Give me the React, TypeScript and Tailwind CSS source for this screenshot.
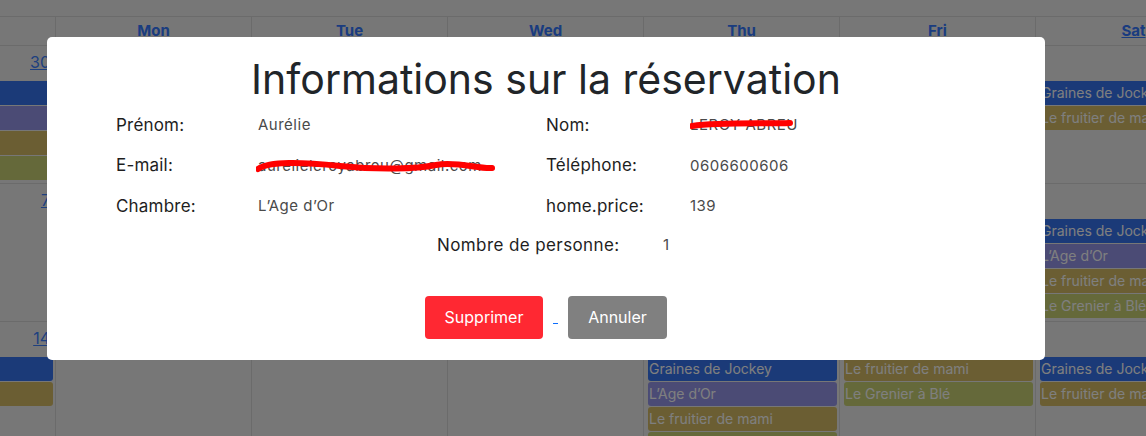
type Ev = { label: string; tone: "blue" | "purple" | "olive" | "green" };

const toneClass: Record<Ev["tone"], string> = {
  blue: "bg-[#3674f0]",
  purple: "bg-[#9696ea]",
  olive: "bg-[#d6bc66]",
  green: "bg-[#cad274]",
};

const days = ["Sun", "Mon", "Tue", "Wed", "Thu", "Fri", "Sat"];

const jockey: Ev = { label: "Graines de Jockey", tone: "blue" };
const ageOr: Ev = { label: "L’Age d’Or", tone: "purple" };
const fruitier: Ev = { label: "Le fruitier de mami", tone: "olive" };
const grenier: Ev = { label: "Le Grenier à Blé", tone: "green" };

const weeks: Array<{ dates: number[]; events: Ev[][] }> = [
  {
    dates: [30, 1, 2, 3, 4, 5, 6],
    events: [[jockey, ageOr, fruitier, grenier], [], [], [], [], [], [jockey, fruitier]],
  },
  {
    dates: [7, 8, 9, 10, 11, 12, 13],
    events: [[], [], [], [], [], [], [jockey, ageOr, fruitier, grenier]],
  },
  {
    dates: [14, 15, 16, 17, 18, 19, 20],
    events: [
      [jockey, fruitier],
      [],
      [],
      [],
      [jockey, ageOr, fruitier, grenier],
      [fruitier, grenier],
      [jockey, fruitier],
    ],
  },
];

function Calendar() {
  return (
    <div className="h-full overflow-hidden">
      <div className="h-[16px]" />
      <div className="ml-[-141px] w-[1372px] border-t border-[#d6d6d6]">
        <div className="grid h-[29px] grid-cols-7 border-b border-[#d6d6d6]">
          {days.map((d, i) => (
            <div
              key={d}
              className={`flex items-center justify-center border-l border-[#d6d6d6] text-[15px] font-bold text-[#3478ff] ${
                i === 6 ? "underline" : ""
              }`}
            >
              {d}
            </div>
          ))}
        </div>
        {weeks.map((w, wi) => (
          <div key={wi} className="grid h-[138px] grid-cols-7 border-b border-[#d6d6d6]">
            {w.dates.map((date, di) => (
              <div key={di} className="flex flex-col border-l border-[#d6d6d6]">
                <div className="h-[35px] pr-[5px] pt-[6px] text-right text-[16px] leading-[20px]">
                  <a className="text-[#3c80ff] underline">{date}</a>
                </div>
                {w.events[di].map((ev, ei) => (
                  <div
                    key={ei}
                    className={`mb-[1px] ml-[4px] mr-[2px] h-[24px] overflow-hidden whitespace-nowrap rounded-[3px] pl-[1px] text-[14px] leading-[24px] text-white ${toneClass[ev.tone]}`}
                  >
                    {ev.label}
                  </div>
                ))}
              </div>
            ))}
          </div>
        ))}
      </div>
    </div>
  );
}

function Field({
  label,
  value,
  scribble,
  labelWidth = "w-[142px]",
}: {
  label: string;
  value: string;
  scribble?: "mail" | "name";
  labelWidth?: string;
}) {
  return (
    <div className="flex h-[40.5px] items-center">
      <div className={`${labelWidth} text-[17px] font-normal tracking-[0.2px] text-[#1e1e1e]`}>{label}</div>
      <div className="relative text-[15px] tracking-[0.5px] text-[#4a4a4a]">
        {value}
        {scribble === "mail" && (
          <svg className="absolute left-[-2px] top-[-3px]" width="240" height="28" viewBox="0 0 240 28">
            <path
              d="M2 17 C 14 9, 45 10, 84 14 S 160 17, 180 13 S 222 17, 236 16"
              fill="none"
              stroke="#ff0000"
              strokeWidth="6"
              strokeLinecap="round"
            />
          </svg>
        )}
        {scribble === "name" && (
          <svg className="absolute left-[0px] top-[-1px]" width="106" height="28" viewBox="0 0 106 28">
            <path
              d="M2 13 C 30 9, 70 11, 100 10"
              fill="none"
              stroke="#ff0000"
              strokeWidth="6"
              strokeLinecap="round"
            />
          </svg>
        )}
      </div>
    </div>
  );
}

export default function App() {
  return (
    <div className="relative h-[436px] w-[1146px] overflow-hidden bg-[#eeeeee] font-['Inter','Liberation_Sans',sans-serif]">
      <Calendar />
      <div className="absolute inset-0 bg-black/50" />
      <div className="absolute left-[47px] top-[37px] flex h-[323px] w-[998px] flex-col rounded-[5px] bg-white">
        <h2 className="pt-[18px] text-center text-[41px] leading-[48px] font-normal text-[#212529]">
          Informations sur la réservation
        </h2>
        <div className="mt-[2px] grid grid-cols-[430px_430px] pl-[69px]">
          <div>
            <Field label="Prénom:" value="Aurélie" />
            <Field label="E-mail:" value="aurelieleroyabreu@gmail.com" scribble="mail" />
            <Field label="Chambre:" value="L’Age d’Or" />
          </div>
          <div>
            <Field label="Nom:" value="LEROY ABREU" scribble="name" labelWidth="w-[144px]" />
            <Field label="Téléphone:" value="0606600606" labelWidth="w-[144px]" />
            <Field label="home.price:" value="139" labelWidth="w-[144px]" />
          </div>
        </div>
        <div className="flex h-[38px] items-center justify-center pl-[18px]">
          <div className="w-[226px] text-[17px] font-normal tracking-[0.4px] text-[#1e1e1e]">Nombre de personne:</div>
          <div className="w-[10px] text-[15px] text-[#4a4a4a]">1</div>
        </div>
        <div className="mt-[31px] flex items-center justify-center gap-[10px]">
          <button className="h-[43px] w-[118px] rounded-[4px] bg-[#ff2832] text-[16px] font-normal text-white">
            Supprimer
          </button>
          <span className="mt-[13px] h-[1px] w-[5px] bg-[#0d6efd]" />
          <button className="h-[43px] w-[99px] rounded-[4px] bg-[#808080] text-[16px] font-normal text-white">
            Annuler
          </button>
        </div>
      </div>
    </div>
  );
}
